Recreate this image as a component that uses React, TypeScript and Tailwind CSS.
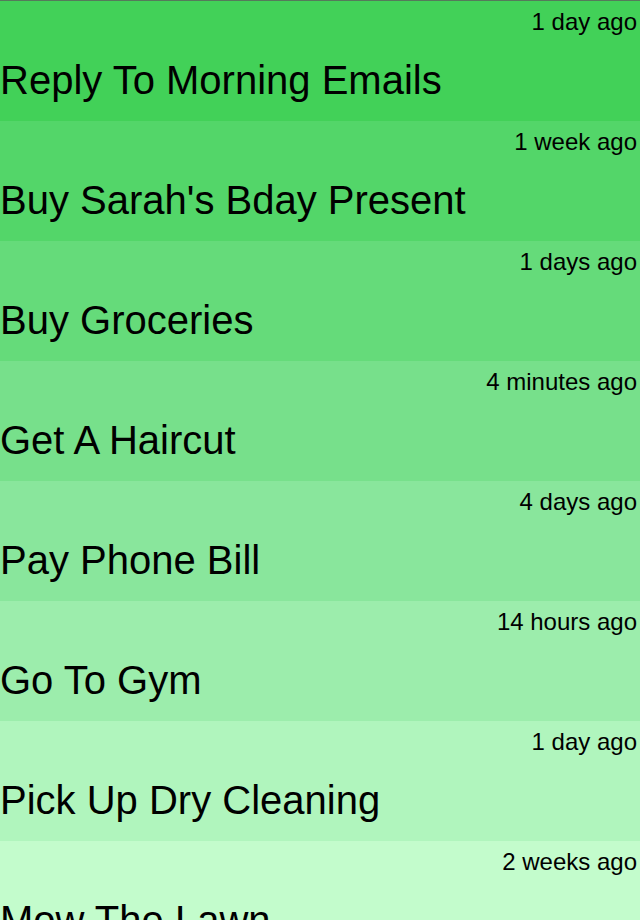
import React from "react";

const items = [
  { title: "Reply To Morning Emails", time: "1 day ago", bg: "bg-[#42d158]" },
  { title: "Buy Sarah's Bday Present", time: "1 week ago", bg: "bg-[#53d669]" },
  { title: "Buy Groceries", time: "1 days ago", bg: "bg-[#65db7a]" },
  { title: "Get A Haircut", time: "4 minutes ago", bg: "bg-[#77e08b]" },
  { title: "Pay Phone Bill", time: "4 days ago", bg: "bg-[#89e69c]" },
  { title: "Go To Gym", time: "14 hours ago", bg: "bg-[#9cedac]" },
  { title: "Pick Up Dry Cleaning", time: "1 day ago", bg: "bg-[#b0f5bd]" },
  { title: "Mow The Lawn", time: "2 weeks ago", bg: "bg-[#c3fccc]" },
];

export default function App() {
  return (
    <div
      className="w-[640px] h-[920px] overflow-hidden border-t border-[#557a5b] text-black"
      style={{ fontFamily: '"Liberation Sans", Arial, sans-serif' }}
    >
      {items.map((it) => (
        <div key={it.title} className={`${it.bg} h-[120px] flex flex-col pt-[7px]`}>
          <div className="text-[24px] leading-[28px] text-right pr-[3px]">{it.time}</div>
          <div className="text-[40px] leading-[48px] mt-[20px] whitespace-nowrap">{it.title}</div>
        </div>
      ))}
    </div>
  );
}
